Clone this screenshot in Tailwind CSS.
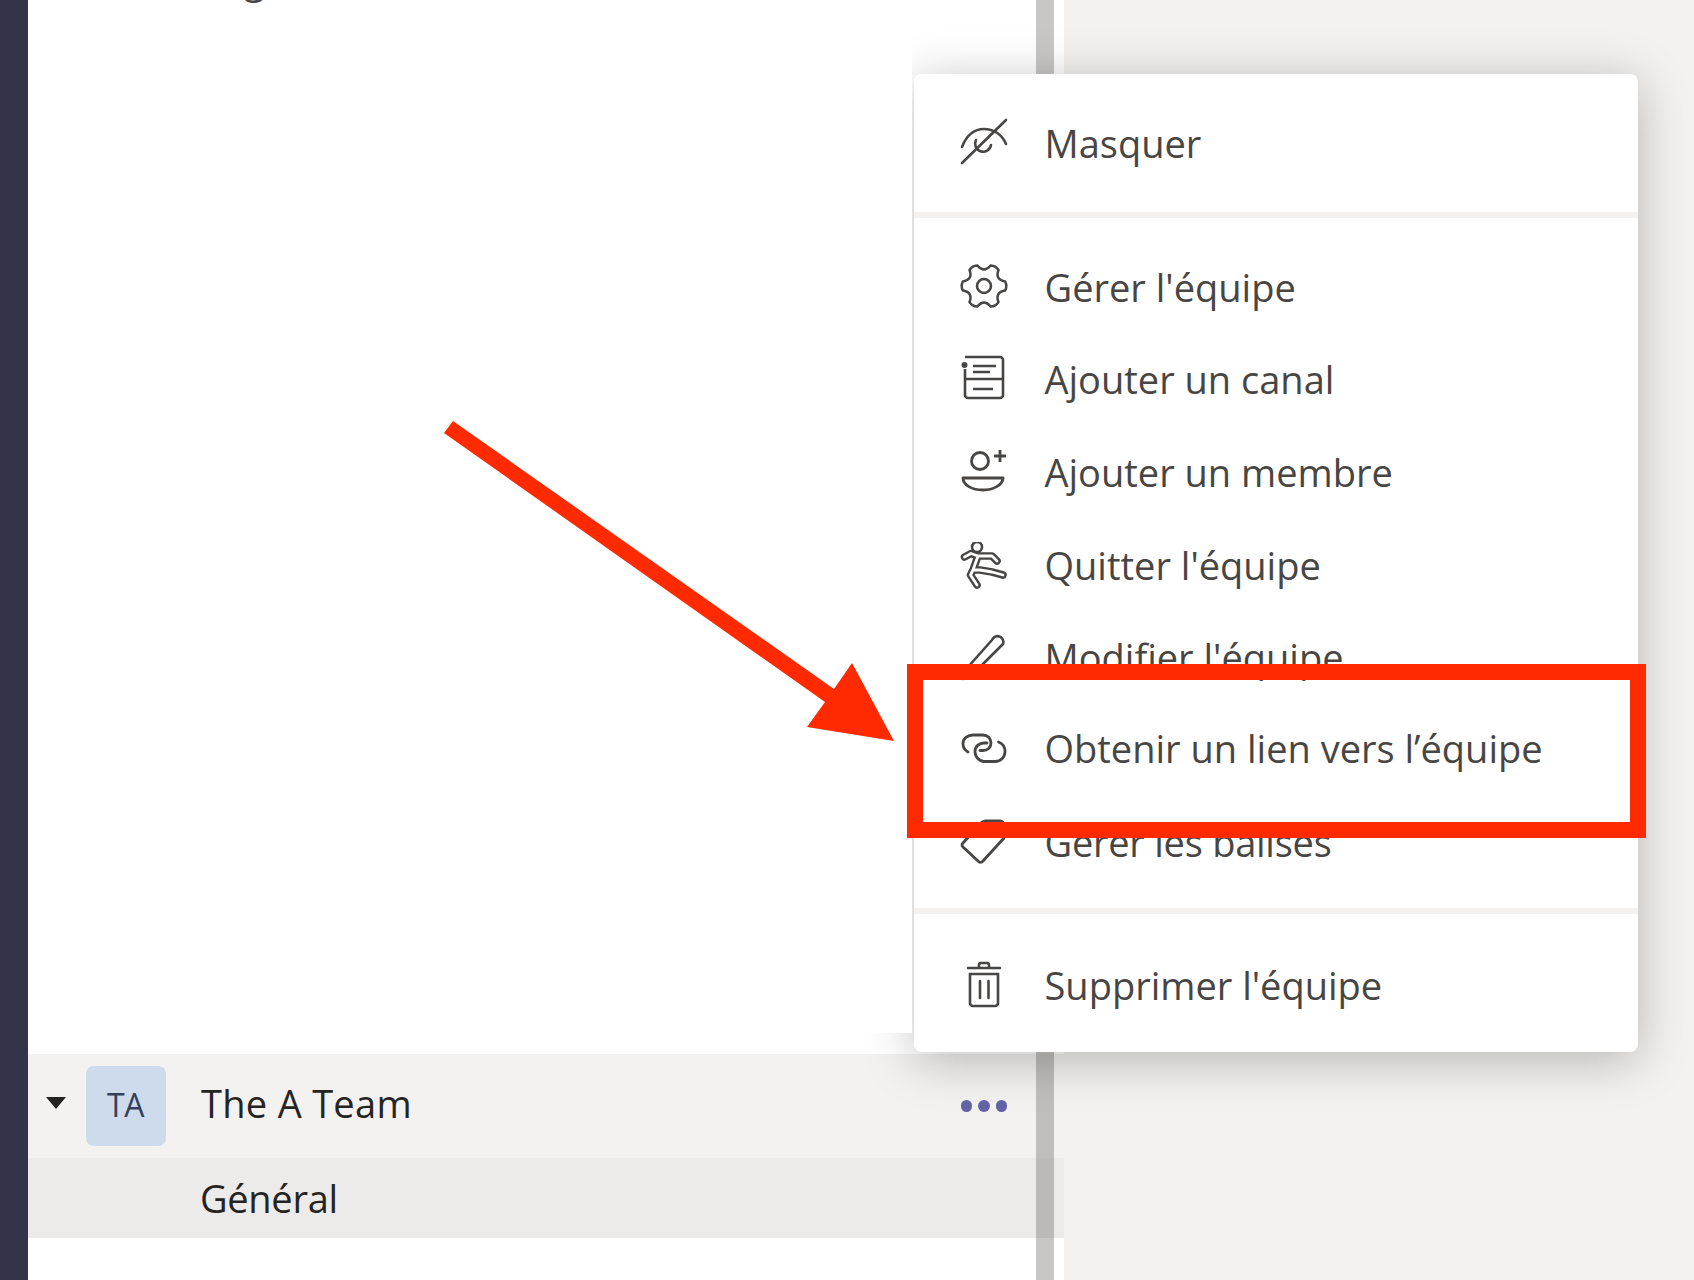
<!DOCTYPE html>
<html lang="fr">
<head>
  <meta charset="UTF-8" />
  <title>Teams - menu de l'équipe</title>
  <script src="https://cdn.jsdelivr.net/npm/@tailwindcss/browser@4"></script>
</head>
<body class="h-[1280px] w-[1694px] overflow-hidden bg-[#f3f2f1] font-['Open_Sans',sans-serif]">
  <div class="relative flex h-[1280px] w-[1694px]">

    <!-- App rail -->
    <div class="w-[28px] shrink-0 bg-[#33344a]"></div>

    <!-- Team list -->
    <div class="relative flex w-[1036px] shrink-0 flex-col bg-white">
      <div class="h-[1054px]"></div>
      <div class="flex h-[104px] items-center bg-[#f3f2f1]">
        <div class="flex w-[56px] justify-center">
          <div class="mt-[-6px] h-0 w-0 border-x-[10px] border-t-[12px] border-x-transparent border-t-[#252423]"></div>
        </div>
        <div class="ml-[2px] flex h-[80px] w-[80px] items-center justify-center rounded-lg bg-[#cddbec] pb-[2px] pr-[1px] text-[32px] tracking-[-0.5px] text-[#33415e]">TA</div>
        <div class="mb-[6px] ml-[35px] text-[38px] tracking-[0.3px] text-[#252423]">The A Team</div>
        <div class="ml-auto mr-[57px] flex gap-[6px]">
          <span class="h-[11.5px] w-[11.5px] rounded-full bg-[#6264a7]"></span>
          <span class="h-[11.5px] w-[11.5px] rounded-full bg-[#6264a7]"></span>
          <span class="h-[11.5px] w-[11.5px] rounded-full bg-[#6264a7]"></span>
        </div>
      </div>
      <div class="flex h-[80px] items-center bg-[#ecebe9] pl-[172px] text-[38px] tracking-[-0.3px] text-[#252423]">Général</div>

      <!-- Scrollbar -->
      <div class="absolute bottom-0 left-[1008px] top-0 w-[18px] bg-[#605e5c]/35"></div>
    </div>

    <!-- Menu shadow, cut off by the white mask on its left side -->
    <div class="absolute left-[914px] top-[74px] h-[978px] w-[724px] rounded-lg shadow-[0_8px_50px_rgba(0,0,0,0.26)]"></div>
    <div class="absolute left-[28px] top-0 h-[1033px] w-[884px] overflow-hidden bg-white">
      <p class="mt-[-45px] pl-[216px] text-[38px] leading-[48px] text-[#484644]">g</p>
    </div>

    <!-- Context menu -->
    <div class="absolute left-[914px] top-[74px] flex h-[978px] w-[724px] flex-col overflow-hidden rounded-lg bg-white text-[38px] text-[#484644]">
      <div class="flex h-[138px] items-center gap-[36.5px] pl-[46px]">
        <svg class="-mt-[2px] h-12 w-12 shrink-0" viewBox="0 0 48 48" fill="none" stroke="#484644" stroke-width="2.6" stroke-linecap="round">
          <path d="M2 45 46 2" />
          <path d="M2 29C7 16 15 11 24 11C33 11 42 16 46 26" />
          <path d="M16 22A8 8 0 1 0 31 27" />
        </svg>
        <span>Masquer</span>
      </div>
      <div class="h-[6px] shrink-0 bg-[#f3f2f1]"></div>

      <div class="flex flex-1 flex-col pt-[22px]">
        <div class="flex h-[92px] items-center gap-[36.5px] pl-[46px]">
          <svg class="h-12 w-12 shrink-0" viewBox="0 0 48 48" fill="none" stroke="#484644" stroke-width="2.6">
            <path transform="translate(24 24) scale(.96) translate(-24 -24)" d="M46 28.68Q48.5 24 46 19.32Q35.26 17.5 39.06 7.28Q36.25 2.78 30.95 2.6Q24 11 17.05 2.6Q11.75 2.78 8.94 7.28Q12.74 17.5 2 19.32Q-.5 24 2 28.68Q12.74 30.5 8.94 40.72Q11.75 45.22 17.05 45.4Q24 37 30.95 45.4Q36.25 45.22 39.06 40.72Q35.26 30.5 46 28.68Z" />
            <circle cx="24" cy="24" r="7" />
          </svg>
          <span class="mt-[2px]">Gérer l'équipe</span>
        </div>
        <div class="flex h-[92px] items-center gap-[36.5px] pl-[46px]">
          <svg class="h-12 w-12 shrink-0" viewBox="0 0 48 48" fill="none" stroke="#484644" stroke-width="2.6">
            <path d="M5 3H40A3 3 0 0 1 43 6V41A3 3 0 0 1 40 44H8A3 3 0 0 1 5 41V15" />
            <path d="M5 25H43M13 12H36M13 18H30M13 35H33" />
            <circle cx="4.5" cy="11" r="3" fill="#484644" stroke="none" />
          </svg>
          <span class="mt-[2px]">Ajouter un canal</span>
        </div>
        <div class="mt-[4px] flex h-[92px] items-center gap-[36.5px] pl-[46px]">
          <svg class="h-12 w-12 shrink-0" viewBox="0 0 48 48" fill="none" stroke="#484644" stroke-width="2.8">
            <circle cx="20" cy="11" r="8.5" />
            <path d="M40 0V12M34 6H46" />
            <path d="M3 28H43C43 35 33 40 23 40C12 40 3 35 3 28Z" stroke-linejoin="round" />
          </svg>
          <span class="mb-[3px]">Ajouter un membre</span>
        </div>
        <div class="flex h-[92px] items-center gap-[36.5px] pl-[46px]">
          <svg class="h-12 w-12 shrink-0" viewBox="0 0 48 48" fill="none" stroke-linecap="round" stroke-linejoin="round">
            <circle cx="17" cy="5" r="5" stroke="#484644" stroke-width="2.6" fill="white" />
            <path stroke="#484644" stroke-width="7.6" d="M18 14 11 11.5 4.5 15M19 14H32L37 19M18 14 13 28 10.5 33 17 43M13 28 20 28 32 30 43 33" />
            <path stroke="white" stroke-width="2.8" d="M18 14 11 11.5 4.5 15M19 14H32L37 19M18 14 13 28 10.5 33 17 43M13 28 20 28 32 30 43 33" />
          </svg>
          <span class="mb-[2px]">Quitter l'équipe</span>
        </div>
        <div class="flex h-[92px] items-center gap-[36.5px] pl-[46px]">
          <svg class="h-12 w-12 shrink-0" viewBox="0 0 48 48" fill="none" stroke="#484644" stroke-width="2.6" stroke-linejoin="round">
            <path d="M32 6A5 5 0 0 1 43 10L14 39 3 45 8 33Z" />
          </svg>
          <span class="mb-[2px]">Modifier l'équipe</span>
        </div>
        <div class="flex h-[92px] items-center gap-[36.5px] pl-[46px]">
          <svg class="h-12 w-12 shrink-0" viewBox="0 0 48 48" fill="none" stroke="#484644" stroke-width="2.8" stroke-linecap="round">
            <path d="M8 26C4.5 24 3 21 3 17.5C3 12.5 7.5 9 13 9H23C27.5 9 31 12.5 31 17C31 21.5 27.5 24.5 23 24.5H20" />
            <path d="M27 17H24C19 17 15 20.5 15 25.5C15 31 19.5 35.5 24 35.5H35C41 35.5 45 31 45 25.5C45 21 42.5 17.5 38.5 16" />
          </svg>
          <span class="mb-[3px]">Obtenir un lien vers l’équipe</span>
        </div>
        <div class="flex h-[92px] items-center gap-[36.5px] pl-[46px]">
          <svg class="h-12 w-12 shrink-0" viewBox="0 0 48 48" fill="none" stroke="#484644" stroke-width="2.8" stroke-linejoin="round">
            <path d="M25 3H40A4 4 0 0 1 44 7V20L23 43A3 3 0 0 1 18 43L3 29A2.5 2.5 0 0 1 3 25L22 4Z" />
          </svg>
          <span class="tracking-[-0.25px]">Gérer les balises</span>
        </div>
      </div>

      <div class="h-[6px] shrink-0 bg-[#f3f2f1]"></div>
      <div class="flex h-[138px] items-center gap-[36.5px] pl-[46px] pt-[4px]">
        <svg class="h-12 w-12 shrink-0" viewBox="0 0 48 48" fill="none" stroke="#484644" stroke-width="2.6" stroke-linecap="round">
          <path d="M8 7H40M19 7V4A2 2 0 0 1 21 2H27A2 2 0 0 1 29 4V7" />
          <path d="M10 13H38V42A3 3 0 0 1 35 45H13A3 3 0 0 1 10 42Z" />
          <path d="M20 20V37M28.5 20V37" />
        </svg>
        <span>Supprimer l'équipe</span>
      </div>
    </div>

    <!-- Red annotation -->
    <div class="absolute left-[907px] top-[664px] h-[174px] w-[739px] border-[16px] border-[#ff2a00]"></div>
    <svg class="absolute left-0 top-0 h-[1280px] w-[1694px]" viewBox="0 0 1694 1280">
      <polygon fill="#ff2a00" points="444,433 453,421 834,689 852,663 894,741 807,727 825,702" />
    </svg>
  </div>
</body>
</html>
